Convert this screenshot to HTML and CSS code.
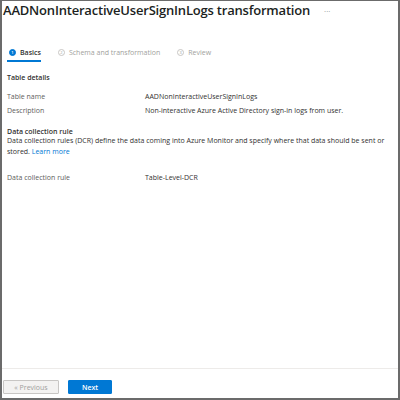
FILE: index.html
```html
<!DOCTYPE html>
<html lang="en">
<head>
    <meta charset="UTF-8">
    <title>AADNonInteractiveUserSignInLogs transformation</title>
    <link rel="stylesheet" href="styles.css">
</head>
<body>
    <div class="blade">
        <div class="blade-header">
            <h1>AADNonInteractiveUserSignInLogs transformation</h1>
            <span class="more">···</span>
        </div>

        <!-- wizard steps -->
        <div class="steps">
            <div class="step active"><span class="step-num">1</span>Basics</div>
            <div class="step"><span class="step-num">2</span>Schema and transformation</div>
            <div class="step"><span class="step-num">3</span>Review</div>
        </div>

        <div class="blade-content">
            <h3>Table details</h3>
            <div class="field">
                <div class="field-label">Table name</div>
                <div class="field-value">AADNonInteractiveUserSignInLogs</div>
            </div>
            <div class="field">
                <div class="field-label">Description</div>
                <div class="field-value">Non-interactive Azure Active Directory sign-in logs from user.</div>
            </div>

            <h3 class="section-gap">Data collection rule</h3>
            <p class="info">Data collection rules (DCR) define the data coming into Azure Monitor and specify where that data should be sent or stored. <a href="#">Learn more</a></p>

            <div class="field field-dcr">
                <div class="field-label">Data collection rule</div>
                <div class="field-value">Table-Level-DCR</div>
            </div>
        </div>

        <div class="blade-footer">
            <button class="btn btn-prev" disabled>« Previous</button>
            <button class="btn btn-next">Next</button>
        </div>
    </div>
</body>
</html>
```

FILE: styles.css
```css
body {
    margin: 0;
    font-family: 'Open Sans', 'Noto Sans', sans-serif;
    color: #323130;
    background: #fff;
}
.blade {
    box-sizing: border-box;
    width: 400px;
    height: 400px;
    border: 2px solid #6b6b6b;
    border-top-width: 1px;
    display: flex;
    flex-direction: column;
}
.blade-header {
    display: flex;
    align-items: center;
    padding: 0 0 0 1px;
    height: 18px;
}
h1 {
    margin: 0;
    font-size: 13px;
    font-weight: 600;
    color: #201f1e;
    letter-spacing: -0.2px;
}
.more {
    margin-left: 14px;
    font-size: 8px;
    color: #8a8886;
}
.steps {
    display: flex;
    margin-top: 29px;
    padding-left: 5px;
    gap: 13px;
}
.step {
    display: flex;
    align-items: center;
    font-size: 7px;
    color: #a19f9d;
    padding-bottom: 3px;
    border-bottom: 2px solid transparent;
}
.step + .step {
    margin-left: 2px;
}
.step.active {
    color: #323130;
    font-weight: 600;
    border-bottom-color: #0078d4;
}
.step-num {
    box-sizing: border-box;
    width: 7px;
    height: 7px;
    border-radius: 50%;
    border: 1px solid #c8c6c4;
    font-size: 4px;
    display: inline-flex;
    align-items: center;
    justify-content: center;
    margin: 0 4px 0 2px;
    color: #a19f9d;
}
.step.active .step-num {
    background: #0078d4;
    border-color: #0078d4;
    color: #fff;
}
.blade-content {
    flex: 1;
    padding: 0 5px;
    font-size: 7px;
}
h3 {
    margin: 11px 0 7px;
    font-size: 7px;
    font-weight: 600;
}
.section-gap {
    margin: 10px 0 0;
}
.field {
    display: flex;
    height: 14px;
    align-items: center;
}
.field-label {
    width: 138px;
    color: #605e5c;
}
.field-value {
    color: #323130;
}
.info {
    margin: 0;
    line-height: 10.5px;
}
.info a {
    color: #0078d4;
    text-decoration: none;
}
.field-dcr {
    margin-top: 13px;
}
.blade-footer {
    border-top: 1px solid #edebe9;
    display: flex;
    gap: 9px;
    padding: 11px 1px 4px;
}
.btn {
    font-family: inherit;
    font-size: 7px;
    height: 14px;
    border-radius: 1px;
    padding: 0;
}
.btn-prev {
    width: 56px;
    background: #f3f2f1;
    border: 1px solid #c8c6c4;
    color: #a19f9d;
}
.btn-next {
    width: 44px;
    background: #0078d4;
    border: 1px solid #0078d4;
    color: #fff;
    font-weight: 600;
}
```
